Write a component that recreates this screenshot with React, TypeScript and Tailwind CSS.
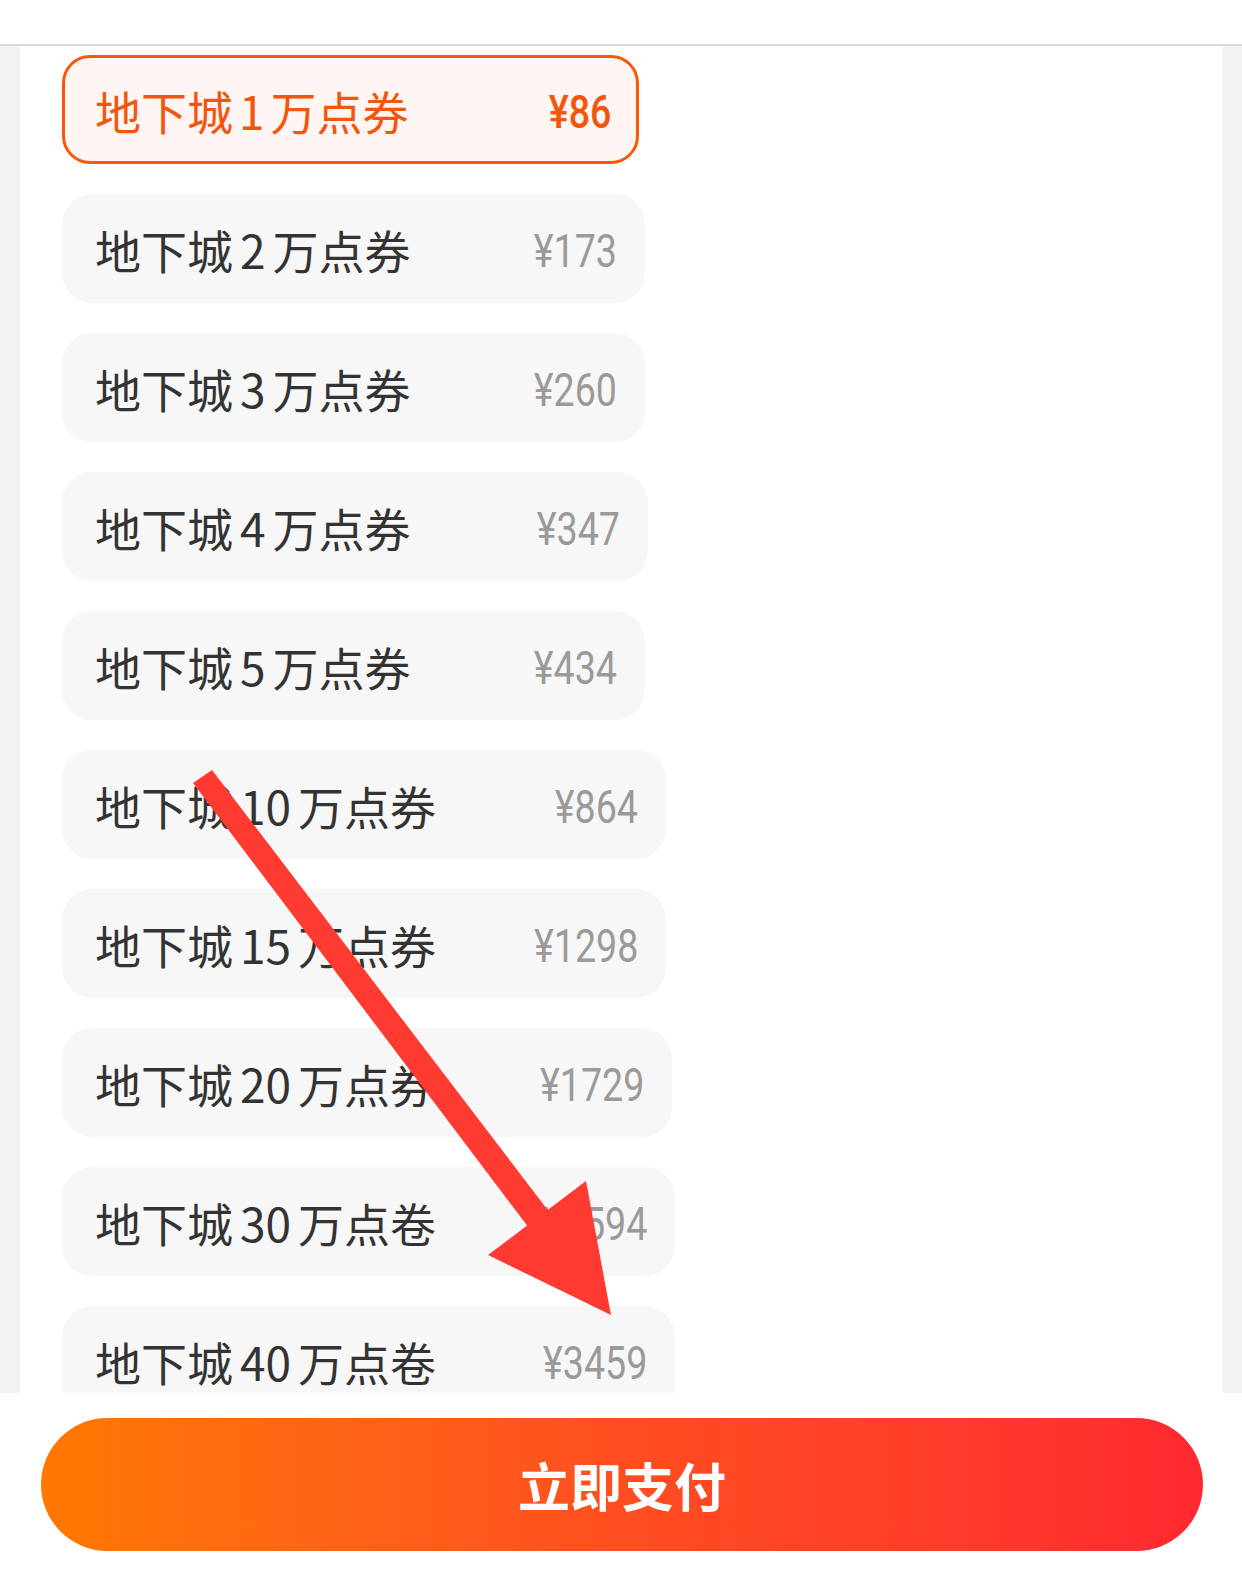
import React from 'react';

type Pack = { n: string; price: string; unit: string; w: string };

const packs: Pack[] = [
  { n: '1', price: '¥86', unit: '券', w: 'w-[577px]' },
  { n: '2', price: '¥173', unit: '券', w: 'w-[583px]' },
  { n: '3', price: '¥260', unit: '券', w: 'w-[583px]' },
  { n: '4', price: '¥347', unit: '券', w: 'w-[586px]' },
  { n: '5', price: '¥434', unit: '券', w: 'w-[583px]' },
  { n: '10', price: '¥864', unit: '券', w: 'w-[604px]' },
  { n: '15', price: '¥1298', unit: '券', w: 'w-[604px]' },
  { n: '20', price: '¥1729', unit: '券', w: 'w-[610px]' },
  { n: '30', price: '¥2594', unit: '卷', w: 'w-[613px]' },
  { n: '40', price: '¥3459', unit: '卷', w: 'w-[613px]' },
];

const cjk = { fontFamily: '"Noto Sans CJK SC", "Noto Sans", sans-serif' };
const num = { fontFamily: 'Roboto, "Liberation Sans", sans-serif' };

const PackCard = ({ pack, active }: { pack: Pack; active: boolean }) => (
  <div
    className={`flex h-[109px] shrink-0 items-center justify-between ${pack.w} ${
      active
        ? 'rounded-[28px] border-[3px] border-[#f9580b] bg-[#fff6f3] pl-[30px] pr-[25px] text-[#f4550d]'
        : 'rounded-[30px] bg-[#f7f7f7] pl-[33px] pr-[28px] text-[#333333]'
    }`}
  >
    <span className="text-[46px] leading-none whitespace-nowrap" style={cjk}>
      地下城<span className={active ? 'mx-[6px]' : 'mx-[7px]'}>{pack.n}</span>万点{pack.unit}
    </span>
    <span
      className={`inline-block origin-right scale-x-[0.8] pt-[4px] text-[47px] leading-none ${
        active ? 'font-medium text-[#f4550d]' : 'text-[#9a9a9a]'
      }`}
      style={num}
    >
      {pack.price}
    </span>
  </div>
);

export default function App() {
  return (
    <div className="relative flex h-[1574px] w-[1242px] flex-col overflow-hidden bg-white">
      {/* header */}
      <div className="h-[46px] shrink-0 border-b-2 border-[#d9d9d9] bg-white" />

      {/* list */}
      <div className="flex h-[1347px] shrink-0 overflow-hidden">
        <div className="w-[20px] shrink-0 bg-[#f2f2f2]" />
        <div className="flex flex-1 flex-col gap-[30px] overflow-hidden bg-white pl-[42px] pt-[9px]">
          {packs.map((p, i) => (
            <PackCard key={p.n} pack={p} active={i === 0} />
          ))}
        </div>
        <div className="w-[19px] shrink-0 bg-[#f2f2f2]" />
      </div>

      {/* pay */}
      <div className="flex flex-1 items-start bg-white pl-[41px] pt-[25px]">
        <button
          className="flex h-[133px] w-[1162px] items-center justify-center rounded-full bg-linear-to-r from-[#ff7800] via-[#ff4d20] to-[#ff2830] text-[52px] font-bold text-white"
          style={cjk}
        >
          立即支付
        </button>
      </div>

      {/* annotation arrow */}
      <svg
        className="pointer-events-none absolute inset-0"
        width="1242"
        height="1574"
        viewBox="0 0 1242 1574"
      >
        <polygon points="193,783 212,770 563,1230 538,1240" fill="#ff3a31" />
        <polygon points="586,1181 488,1255 611,1315" fill="#ff3a31" />
      </svg>
    </div>
  );
}
